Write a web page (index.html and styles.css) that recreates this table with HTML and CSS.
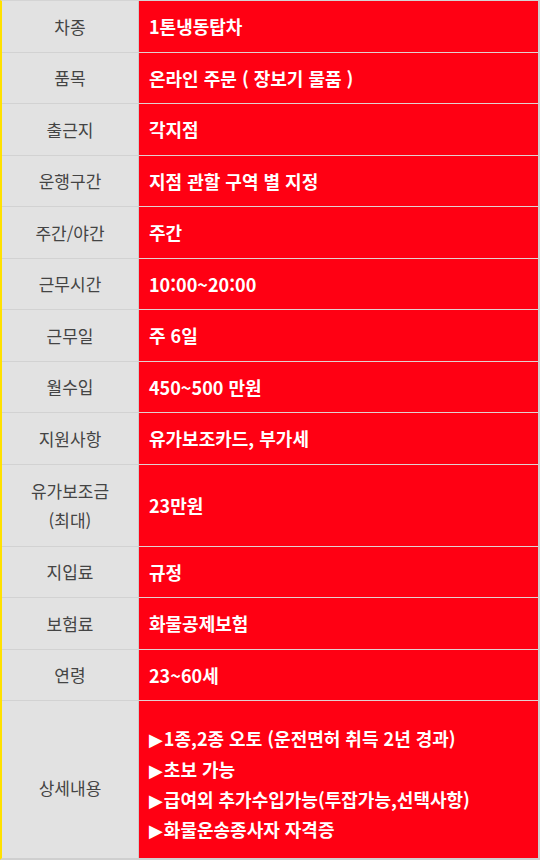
FILE: index.html
```html
<!DOCTYPE html>
<html lang="ko">
<head>
<meta charset="utf-8">
<title>채용 정보</title>
<link rel="stylesheet" href="styles.css">
</head>
<body>
<div class="spec">
  <div class="row"><div class="label">차종</div><div class="value">1톤냉동탑차</div></div>
  <div class="row"><div class="label">품목</div><div class="value">온라인 주문 ( 장보기 물품 )</div></div>
  <div class="row"><div class="label">출근지</div><div class="value">각지점</div></div>
  <div class="row"><div class="label">운행구간</div><div class="value">지점 관할 구역 별 지정</div></div>
  <div class="row"><div class="label">주간/야간</div><div class="value">주간</div></div>
  <div class="row"><div class="label">근무시간</div><div class="value">10:00~20:00</div></div>
  <div class="row"><div class="label">근무일</div><div class="value">주 6일</div></div>
  <div class="row"><div class="label">월수입</div><div class="value">450~500 만원</div></div>
  <div class="row"><div class="label">지원사항</div><div class="value">유가보조카드, 부가세</div></div>
  <div class="row row-tall"><div class="label">유가보조금<br>(최대)</div><div class="value">23만원</div></div>
  <div class="row"><div class="label">지입료</div><div class="value">규정</div></div>
  <div class="row"><div class="label">보험료</div><div class="value">화물공제보험</div></div>
  <div class="row"><div class="label">연령</div><div class="value">23~60세</div></div>
  <div class="row row-detail">
    <div class="label">상세내용</div>
    <div class="value">
      <ul class="details">
        <li><span class="tri">▶</span>1종,2종 오토 (운전면허 취득 2년 경과)</li>
        <li><span class="tri">▶</span>초보 가능</li>
        <li><span class="tri">▶</span>급여외 추가수입가능(투잡가능,선택사항)</li>
        <li><span class="tri">▶</span>화물운송종사자 자격증</li>
      </ul>
    </div>
  </div>
</div>
</body>
</html>
```

FILE: styles.css
```css
html, body {
  margin: 0;
  padding: 0;
  background: #ffffff;
}

body {
  font-family: "Noto Sans CJK KR", "Noto Sans", sans-serif;
}

.spec {
  width: 540px;
  box-sizing: border-box;
  border-top: 1px solid #d4d4d4;
  border-left: 2px solid #ffe100;
  border-right: 2px solid #cfcfcf;
  border-bottom: 2px solid #cfcfcf;
}

.row {
  display: grid;
  grid-template-columns: 137px 1fr;
  height: 51.5px;
}

.row-tall {
  height: 82px;
}

.row-detail {
  height: 157px;
}

.label {
  display: flex;
  align-items: center;
  justify-content: center;
  text-align: center;
  box-sizing: border-box;
  background: #e2e2e2;
  color: #444444;
  font-size: 17px;
  line-height: 29px;
  border-right: 1px solid #cdcdcd;
  border-bottom: 1px solid #d2d2d2;
}

.value {
  display: flex;
  align-items: center;
  box-sizing: border-box;
  padding-left: 10px;
  background: #ff0013;
  color: #ffffff;
  font-size: 18px;
  font-weight: 700;
  line-height: 28px;
  border-bottom: 1px solid #e3d0d0;
}

.row-detail .label,
.row-detail .value {
  border-bottom: none;
}

.row-detail .label {
  padding-top: 16px;
}

.row-detail .value {
  padding-top: 11px;
}

.details {
  list-style: none;
  margin: 0;
  padding: 0;
}

.details li {
  line-height: 28.3px;
}

.tri {
  font-family: "DejaVu Sans", sans-serif;
  font-size: 18px;
  margin-right: 1px;
}
```
